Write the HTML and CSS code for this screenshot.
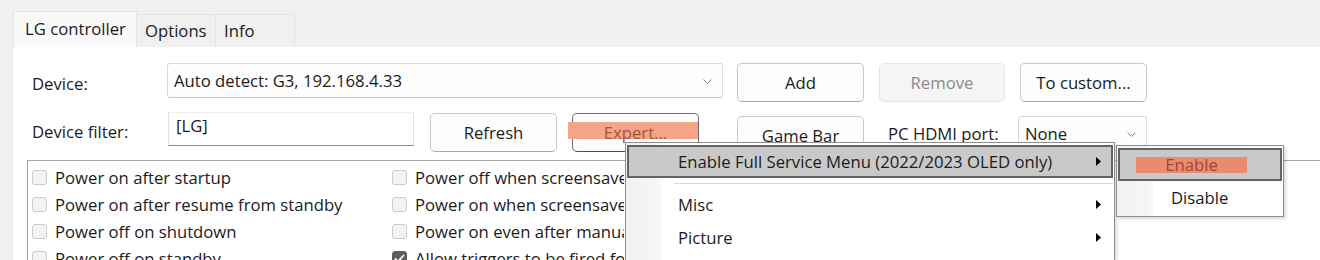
FILE: index.html
```html
<!DOCTYPE html>
<html>
<head>
<meta charset="utf-8">
<link rel="stylesheet" href="styles.css">
</head>
<body>
<div class="tabs">
  <div class="tab active">LG controller</div>
  <div class="tab">Options</div>
  <div class="tab">Info</div>
</div>
<div class="panel">
  <div class="row row1">
    <div class="label">Device:</div>
    <div class="combo wide"><span>Auto detect: G3, 192.168.4.33</span><svg class="chev" width="9" height="5" viewBox="0 0 9 5"><path d="M0.5 0.5 L4.5 4.5 L8.5 0.5" fill="none" stroke="#8a8a8a" stroke-width="1"/></svg></div>
    <div class="btn b-add">Add</div>
    <div class="btn disabled b-remove">Remove</div>
    <div class="btn b-custom">To custom...</div>
  </div>
  <div class="row row2">
    <div class="label label2">Device filter:</div>
    <div class="textbox">[LG]</div>
    <div class="btn b-refresh">Refresh</div>
    <div class="btn focused b-expert"><span class="mark"></span><span class="marktext">Expert...</span></div>
    <div class="btn b-game">Game Bar</div>
    <div class="label label3">PC HDMI port:</div>
    <div class="combo small"><span>None</span><svg class="chev" width="9" height="5" viewBox="0 0 9 5"><path d="M0.5 0.5 L4.5 4.5 L8.5 0.5" fill="none" stroke="#8a8a8a" stroke-width="1"/></svg></div>
  </div>
  <div class="group">
    <div class="col">
      <div class="cb"><span class="box"></span>Power on after startup</div>
      <div class="cb"><span class="box"></span>Power on after resume from standby</div>
      <div class="cb"><span class="box"></span>Power off on shutdown</div>
      <div class="cb"><span class="box"></span>Power off on standby</div>
    </div>
    <div class="col col2">
      <div class="cb"><span class="box"></span>Power off when screensaver activates</div>
      <div class="cb"><span class="box"></span>Power on when screensaver deactivates</div>
      <div class="cb"><span class="box"></span>Power on even after manual power off</div>
      <div class="cb"><span class="box checked"><svg width="11" height="9" viewBox="0 0 11 9"><path d="M1 4.5 L4 7.5 L10 1" fill="none" stroke="#fff" stroke-width="1.8"/></svg></span>Allow triggers to be fired for all devices</div>
    </div>
  </div>
</div>

<div class="menu">
  <div class="gutter"></div>
  <div class="mitem hl"><span>Enable Full Service Menu (2022/2023 OLED only)</span><svg class="arr" width="5" height="9" viewBox="0 0 5 9"><path d="M0 0 L5 4.5 L0 9 Z" fill="#000"/></svg></div>
  <div class="sep"></div>
  <div class="mitem"><span>Misc</span><svg class="arr" width="5" height="9" viewBox="0 0 5 9"><path d="M0 0 L5 4.5 L0 9 Z" fill="#000"/></svg></div>
  <div class="mitem"><span>Picture</span><svg class="arr" width="5" height="9" viewBox="0 0 5 9"><path d="M0 0 L5 4.5 L0 9 Z" fill="#000"/></svg></div>
</div>
<div class="submenu">
  <div class="gutter sg"></div>
  <div class="sitem hl"><span class="emark">Enable</span></div>
  <div class="sitem"><span class="stext">Disable</span></div>
</div>
</body>
</html>
```
FILE: styles.css
```css
* { box-sizing: border-box; }
html, body { margin: 0; padding: 0; }
body {
  width: 1320px;
  height: 260px;
  overflow: hidden;
  background: #f0f0f0;
  font-family: "Open Sans", "Noto Sans", sans-serif;
  font-size: 16.7px;
  color: #1b1b1b;
  position: relative;
}
.tabs {
  display: flex;
  align-items: flex-end;
  padding-left: 13px;
  height: 47px;
}
.tab {
  height: 33px;
  padding: 4px 0 0 8px;
  border: 1px solid #e3e3e3;
  border-bottom: none;
  border-left: none;
  background: #f0f0f0;
}
.tab:nth-child(2) { width: 79px; }
.tab:nth-child(3) { width: 79px; }
.tab.active {
  width: 124px;
  height: 36px;
  padding: 5px 0 0 11px;
  background: #f9f9f9;
  border-left: 1px solid #e3e3e3;
}
.panel {
  margin-left: 13px;
  height: 213px;
  background: #fff;
  padding: 16px 0 0 14px;
}
.row {
  display: flex;
  align-items: flex-start;
  padding-left: 5px;
}
.row2 { margin-top: 10px; }
.label {
  width: 135px;
  padding-top: 9px;
  line-height: 24px;
}
.label2 { width: 136px; padding-top: 8px; }
.combo {
  height: 35px;
  border: 1px solid #dadada;
  border-bottom-color: #c4c4c4;
  border-radius: 3px;
  background: #fdfdfd;
  display: flex;
  align-items: center;
  justify-content: space-between;
  padding: 0 10px 0 6px;
}
.combo.wide { width: 556px; }
.combo.small { width: 129px; margin-top: 4px; }
.combo span { line-height: 24px; }
.chev { margin-top: 1px; }
.btn {
  width: 127px;
  height: 39px;
  border: 1px solid #c8c8c8;
  border-bottom-color: #a8a8a8;
  border-radius: 5px;
  background: #fdfdfd;
  display: flex;
  align-items: center;
  justify-content: center;
  position: relative;
}
.b-add { margin-left: 14px; }
.b-remove { margin-left: 15px; width: 126px; }
.b-custom { margin-left: 15px; }
.btn.disabled {
  background: #f5f5f5;
  border-color: #e5e5e5;
  color: #8b8b8b;
}
.textbox {
  width: 246px;
  height: 34px;
  border: 1px solid #e2e2e2;
  border-top-color: #ececec;
  border-bottom-color: #8d8d8d;
  padding: 1px 0 0 7px;
  line-height: 24px;
}
.b-refresh { margin-left: 16px; margin-top: 1px; }
.b-expert { margin-left: 15px; margin-top: 1px; border-color: #707070; border-bottom-color: #505050; }
.mark {
  position: absolute;
  left: -5px;
  top: 8px;
  width: 130px;
  height: 17px;
  background: #f5a487;
}
.marktext { position: relative; color: #a5533a; }
.b-game { margin-left: 38px; margin-top: 4px; }
.label3 { width: 130px; margin-left: 24px; padding-top: 10px; }
.group {
  margin-top: 5px;
  border-top: 1px solid #a6a6a6;
  border-left: 1px solid #a6a6a6;
  padding: 9px 0 0 4px;
  display: flex;
}
.col { width: 360px; display: flex; flex-direction: column; gap: 12px; }
.col2 { width: 232px; overflow: hidden; }
.cb {
  display: flex;
  align-items: center;
  height: 15px;
  white-space: nowrap;
  line-height: 15px;
}
.box {
  width: 15px;
  height: 15px;
  flex: none;
  margin-right: 8px;
  border: 1px solid #cbcbcb;
  border-radius: 3px;
  background: #f3f3f3;
  display: flex;
  align-items: center;
  justify-content: center;
}
.box.checked { background: #5d5d5d; border-color: #5d5d5d; }

.menu {
  position: absolute;
  left: 625px;
  top: 142px;
  width: 490px;
  height: 118px;
  background: #fff;
  border: 1px solid #8e8e8e;
  border-bottom: none;
  padding: 2px 1px 0 1px;
  box-shadow: 2px 2px 3px rgba(0,0,0,0.15);
}
.gutter {
  position: absolute;
  left: 0;
  top: 0;
  bottom: 0;
  width: 36px;
  background: linear-gradient(to right, #f1f1f1, #f5f5f5 80%, #fafafa);
}
.mitem {
  position: relative;
  height: 33px;
  display: flex;
  align-items: center;
  justify-content: space-between;
  padding: 0 12px 0 51px;
}
.mitem.hl, .sitem.hl {
  background: #c9c9c9;
  border: 2px solid #646464;
  padding-left: 49px;
  padding-right: 10px;
}
.sep {
  position: relative;
  height: 10px;
  margin-left: 47px;
  border-bottom: 1px solid #d4d4d4;
  transform: translateY(-4px);
}
.submenu {
  position: absolute;
  left: 1116px;
  top: 145px;
  width: 168px;
  height: 72px;
  background: #fff;
  border: 1px solid #8e8e8e;
  padding: 2px 1px 0 1px;
  box-shadow: 2px 2px 3px rgba(0,0,0,0.15);
}
.sg { width: 36px; }
.sitem {
  position: relative;
  height: 33px;
  display: flex;
  align-items: center;
  padding-left: 53px;
}
.sitem.hl { padding-left: 16px; }
.emark {
  width: 111px;
  height: 16px;
  background: #ea8b6f;
  color: #9b4a31;
  display: flex;
  align-items: center;
  justify-content: center;
  line-height: 16px;
}
.stext { line-height: 20px; }
```
